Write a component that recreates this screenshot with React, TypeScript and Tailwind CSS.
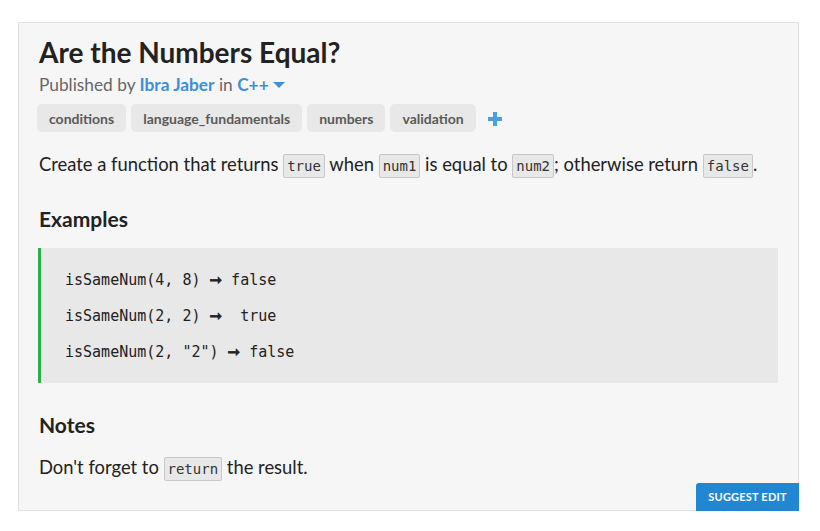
import React from "react";

const Code = ({ children }: { children: React.ReactNode }) => (
  <code className="rounded-[2px] border border-[#c8c8c8] bg-[#e8e8e8] px-[3px] py-[3px] font-['DejaVu_Sans_Mono',monospace] text-[14px] text-[#333]">
    {children}
  </code>
);

const Tag = ({ label }: { label: string }) => (
  <span className="flex h-[28px] items-center rounded-[5px] bg-[#e8e8e8] px-[12px] text-[14px] font-bold text-[#5a5a5a]">
    {label}
  </span>
);

const Arrow = () => (
  <span className="font-['DejaVu_Sans',sans-serif] font-bold [-webkit-text-stroke:0.7px_#222]">➞</span>
);

export default function App() {
  return (
    <div className="min-h-[531px] w-[820px] bg-white pl-[18px] pt-[22px] font-['Lato',sans-serif]">
      <div className="relative h-[489px] w-[781px] border border-[#e0e0e0] bg-[#f6f6f6] pl-[20px] pr-[20px] pt-[11px]">
        <h1 className="text-[28px] font-bold leading-[36px] text-[#222]">Are the Numbers Equal?</h1>
        <div className="mt-[4px] flex items-center text-[17.3px] leading-[22px] text-[#666]">
          <span>Published by&nbsp;</span>
          <span className="font-bold text-[#3d8fd6]">Ibra Jaber</span>
          <span>&nbsp;in&nbsp;</span>
          <span className="font-bold text-[#3d8fd6]">C++</span>
          <svg width="12" height="8" viewBox="0 0 12 8" className="ml-[4px]">
            <path d="M0 1 L12 1 L6 7 Z" fill="#3d8fd6" />
          </svg>
        </div>
        <div className="ml-[-2px] mt-[8px] flex items-center gap-[5px]">
          <Tag label="conditions" />
          <Tag label="language_fundamentals" />
          <Tag label="numbers" />
          <Tag label="validation" />
          <svg width="16" height="16" viewBox="0 0 16 16" className="ml-[6px] mt-[2px]">
            <path d="M6 1 H10 V6 H15 V10 H10 V15 H6 V10 H1 V6 H6 Z" fill="#4a9fe0" />
          </svg>
        </div>
        <p className="mt-[19px] text-[18.4px] leading-[26px] text-[#222]">
          Create a function that returns <Code>true</Code> when <Code>num1</Code> is equal to <Code>num2</Code>; otherwise return <Code>false</Code>.
        </p>
        <h2 className="mt-[26px] text-[21px] font-bold leading-[28px] text-[#222]">Examples</h2>
        <div className="ml-[-1px] mt-[15px] flex h-[135px] flex-col justify-center gap-[14px] border-l-[3px] border-[#2ab24a] bg-[#e8e8e8] pl-[24px] font-['DejaVu_Sans_Mono',monospace] text-[15px] leading-[22px] text-[#222]">
          <div>isSameNum(4, 8) <Arrow /> false</div>
          <div>isSameNum(2, 2) <Arrow />&nbsp; true</div>
          <div>isSameNum(2, "2") <Arrow /> false</div>
        </div>
        <h2 className="mt-[28px] text-[21px] font-bold leading-[28px] text-[#222]">Notes</h2>
        <p className="mt-[15px] text-[18.4px] leading-[26px] text-[#222]">
          Don't forget to <Code>return</Code> the result.
        </p>
        <button className="absolute bottom-[-1px] right-[-1px] h-[28px] w-[103px] rounded-tl-[3px] bg-[#2287d2] text-[11px] font-bold tracking-[0.2px] text-white">
          SUGGEST EDIT
        </button>
      </div>
    </div>
  );
}
